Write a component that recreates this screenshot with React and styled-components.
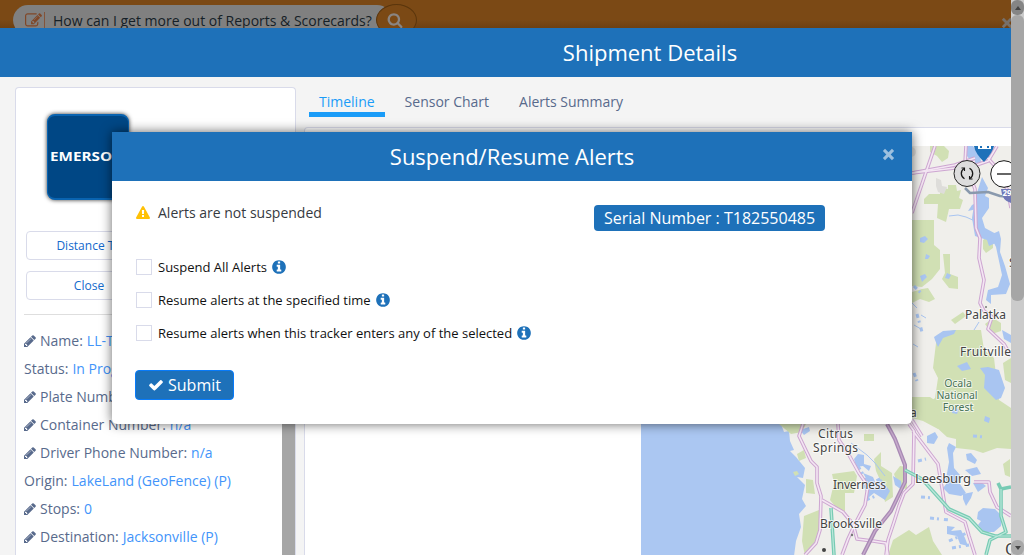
import React from "react";
import styled, { createGlobalStyle } from "styled-components";

const GlobalStyle = createGlobalStyle`
  * { box-sizing: border-box; }
  html, body { margin: 0; height: 100%; overflow: hidden; }
  body { font-family: "Open Sans", "Noto Sans", sans-serif; font-size: 14px; color: #212529; background: #7b4915; }
  button { font-family: inherit; }
`;

const blue = "#1e71b9";

const ICONS = {
  check: "M1671 566q0 40-28 68l-724 724-136 136q-28 28-68 28t-68-28l-136-136-362-362q-28-28-28-68t28-68l136-136q28-28 68-28t68 28l294 295 656-657q28-28 68-28t68 28l136 136q28 28 28 68z",
  pencil: "M491 1536l91-91-235-235-91 91v107h128v128h107zm523-928q0-22-22-22-10 0-17 7l-542 542q-7 7-7 17 0 22 22 22 10 0 17-7l542-542q7-7 7-17zm-54-192l416 416-832 832h-416v-416zm683 96q0 53-37 90l-166 166-416-416 166-165q36-38 90-38 53 0 91 38l235 234q37 39 37 91z",
  info: "M1152 1376v-160q0-14-9-23t-23-9h-96v-512q0-14-9-23t-23-9h-320q-14 0-23 9t-9 23v160q0 14 9 23t23 9h96v320h-96q-14 0-23 9t-9 23v160q0 14 9 23t23 9h448q14 0 23-9t9-23zm-128-896v-160q0-14-9-23t-23-9h-192q-14 0-23 9t-9 23v160q0 14 9 23t23 9h192q14 0 23-9t9-23zm640 416q0 209-103 385.5t-279.5 279.5-385.5 103-385.5-103-279.5-279.5-103-385.5 103-385.5 279.5-279.5 385.5-103 385.5 103 279.5 279.5 103 385.5z",
  warning: "M1024 1375v-190q0-14-9.5-23.5t-22.5-9.5h-192q-13 0-22.5 9.5t-9.5 23.5v190q0 14 9.5 23.5t22.5 9.5h192q13 0 22.5-9.5t9.5-23.5zm-2-374l18-459q0-12-10-19-13-11-24-11h-220q-11 0-24 11-10 7-10 21l17 457q0 10 10 16.5t24 6.5h185q14 0 23.5-6.5t10.5-16.5zm-14-934l768 1408q35 63-2 126-17 29-46.5 46t-63.5 17h-1536q-34 0-63.5-17t-46.5-46q-37-63-2-126l768-1408q17-31 47-49t65-18 65 18 47 49z",
  search: "M1216 832q0-185-131.5-316.5t-316.5-131.5-316.5 131.5-131.5 316.5 131.5 316.5 316.5 131.5 316.5-131.5 131.5-316.5zm512 832q0 52-38 90t-90 38q-54 0-90-38l-343-342q-179 124-399 124-143 0-273.5-55.5t-225-150-150-225-55.5-273.5 55.5-273.5 150-225 225-150 273.5-55.5 273.5 55.5 225 150 150 225 55.5 273.5q0 220-124 399l343 343q37 37 37 90z",
  edit: "M888 1184l116-116-152-152-116 116v56h96v96h56zm440-720q-16-16-33 1l-350 350q-17 17-1 33t33-1l350-350q17-17 1-33zm80 594v190q0 119-84.5 203.5t-203.5 84.5h-832q-119 0-203.5-84.5t-84.5-203.5v-832q0-119 84.5-203.5t203.5-84.5h832q63 0 117 25 15 7 18 23 3 17-9 29l-49 49q-14 14-32 8-23-6-45-6h-832q-66 0-113 47t-47 113v832q0 66 47 113t113 47h832q66 0 113-47t47-113v-126q0-13 9-22l64-64q15-15 35-7t20 29zm-96-738l288 288-672 672h-288v-288zm444 132l-92 92-288-288 92-92q28-28 68-28t68 28l152 152q28 28 28 68t-28 68z",
};

const IconSvg = styled.svg`
  width: ${(p) => p.$size}px;
  height: ${(p) => p.$size}px;
  fill: ${(p) => p.$color || "currentColor"};
  flex: none;
  display: block;
`;
const Icon = ({ name, size = 14, color, box = "0 0 1792 1792" }) => (
  <IconSvg viewBox={box} $size={size} $color={color} aria-hidden="true">
    <path fillRule="evenodd" d={ICONS[name]} />
  </IconSvg>
);

const Viewport = styled.div`
  display: flex;
  height: 555px;
  width: 1024px;
  overflow: hidden;
  position: relative;
`;
const Page = styled.div`
  flex: 1;
  min-width: 0;
  overflow: hidden;
  display: flex;
  flex-direction: column;
`;

/* Dimmed bar behind the details window */
const TopBar = styled.header`
  height: 28px;
  flex: none;
  width: 100%;
  padding: 5px 0 0 13px;
  display: flex;
  align-items: flex-start;
  overflow: hidden;
  background: linear-gradient(#7b4915 20px, #6d4012 28px);
`;
const SearchPill = styled.div`
  height: 30px;
  width: 379px;
  flex: none;
  border-radius: 15px;
  background: #808080;
  display: flex;
  align-items: center;
  padding-left: 12px;
  color: #152027;
  font-size: 14px;
  white-space: nowrap;
`;
const PillDivider = styled.span`
  width: 1px;
  height: 16px;
  margin: 0 8px 0 2px;
  background: #84543a;
`;
const SearchButton = styled.div`
  width: 41px;
  height: 32px;
  margin: -1px 0 0 -16px;
  border: 1px solid #5a350c;
  border-radius: 50%;
  background: #7b4915;
  display: flex;
  justify-content: center;
  padding: 7px 3px 0 0;
`;
const DimmedClose = styled.span`
  margin: 12px -2px 0 auto;
`;

const TitleBar = styled.div`
  height: 49px;
  flex: none;
  width: ${(p) => p.$width}px;
  background: ${blue};
  color: #fff;
  font-size: 22px;
  line-height: 48px;
  text-align: center;
  display: flex;
  justify-content: center;
`;
const Details = styled.main`
  flex: 1;
  min-height: 0;
  width: 1300px;
  background: #f4f4f4;
  display: flex;
  gap: 8px;
  padding: 10px 15px 0;
`;

const Sidebar = styled.aside`
  width: 281px;
  flex: none;
  border: 1px solid #d9dbea;
  border-bottom: 0;
  border-radius: 4px 4px 0 0;
  background: #fff;
  display: flex;
  overflow: hidden;
`;
const SidebarBody = styled.div`
  flex: 1;
  padding: 26px 8px 0;
`;
const SidebarThumb = styled.div`
  width: 13px;
  margin-top: 180px;
  background: #a6a6a6;
`;
const Logo = styled.div`
  width: 82px;
  height: 86px;
  margin-left: 23px;
  border: 1px solid #0963b0;
  border-width: 2px 1px;
  border-radius: 8px;
  background: #004785;
  box-shadow: 0 0 4px 0 #333;
  color: #fff;
  font-size: 12px;
  font-weight: 700;
  line-height: 82px;
  padding-left: 2px;
  white-space: nowrap;
  overflow: hidden;
`;
const LogoName = styled.span`
  display: inline-block;
  transform: scaleX(1.27);
  transform-origin: left;
`;
const SideActions = styled.div`
  display: grid;
  grid-template-columns: 126px;
  gap: 11px;
  margin: 31px 2px 14px;
`;
const SideButton = styled.button`
  height: 29px;
  padding: 0;
  border: 1px solid #d9dbea;
  border-radius: 4px;
  background: #fff;
  color: #1269cc;
  font-size: 12px;
`;
const FieldList = styled.div`
  border-top: 1px solid #dedede;
  padding-top: 11px;
`;
const Field = styled.div`
  display: flex;
  align-items: center;
  height: 28px;
  gap: 4px;
  font-size: 14px;
  color: #586a8c;
  white-space: nowrap;
  svg { margin: 1px -1px 0 0; width: 13px; height: 14px; }
`;
const Value = styled.span`
  color: #4294fa;
`;

const Content = styled.section`
  flex: 1;
  display: flex;
  flex-direction: column;
`;
const Tabs = styled.nav`
  display: flex;
  gap: 10px;
  padding-left: 5px;
  height: 40px;
`;
const Tab = styled.span`
  height: 30px;
  padding: 0 10px;
  line-height: 30px;
  color: ${(p) => (p.$active ? "#1a9cf8" : "#586a8c")};
  border-bottom: ${(p) => (p.$active ? "5px solid #1a9cf8" : "0")};
`;
const Panel = styled.div`
  flex: 1;
  min-height: 0;
  border: 1px solid #d9dbea;
  border-bottom: 0;
  border-radius: 4px 4px 0 0;
  background: #fff;
  padding: 18px 0 0 336px;
`;
const MapSvg = styled.svg`
  display: block;
  width: 370px;
  height: 409px;
  font-family: "Noto Sans", "Open Sans", sans-serif;
`;

/* Window scrollbar */
const Scrollbar = styled.div`
  width: 13px;
  flex: none;
  background: #cbcbcb;
  display: flex;
  flex-direction: column;
`;
const ScrollArrow = styled.div`
  height: 15px;
  flex: none;
  border-radius: 6px;
  background: ${(p) => (p.$up ? "#858585" : "#a8a8a8")};
  display: flex;
  align-items: center;
  justify-content: center;
  &::before {
    content: "";
    border: 3.5px solid transparent;
    border-top-width: ${(p) => (p.$up ? 0 : 4)}px;
    border-bottom-width: ${(p) => (p.$up ? 4 : 0)}px;
    border-top-color: #444;
    border-bottom-color: #444;
  }
`;
const ScrollThumb = styled.div`
  height: 286px;
  border-radius: 6px;
  background: #a6a6a6;
  margin-bottom: auto;
`;

/* Dialog */
const Dialog = styled.div`
  position: absolute;
  left: 112px;
  top: 132px;
  width: 800px;
  height: 292px;
  background: #fff;
  border-radius: 0 0 5px 5px;
  box-shadow: 0 0 12px rgba(0, 0, 0, 0.6);
`;
const DialogHeader = styled(TitleBar)`
  position: relative;
`;
const CloseButton = styled.button`
  position: absolute;
  right: 16px;
  top: 16px;
  width: 14px;
  height: 14px;
  padding: 0;
  border: 0;
  background: none;
  display: flex;
`;
const DialogBody = styled.div`
  padding: 21px 24px 0;
`;
const StatusRow = styled.div`
  display: flex;
  align-items: flex-start;
  height: 48px;
`;
const Status = styled.div`
  display: flex;
  align-items: center;
  gap: 8px;
  width: 458px;
  height: 21px;
  font-size: 14px;
  color: #363a3f;
`;
const Serial = styled.span`
  margin-top: 3px;
  height: 26px;
  padding: 0 10px;
  width: 231px;
  white-space: nowrap;
  border-radius: 4px;
  background: ${blue};
  color: #fff;
  font-size: 16px;
  line-height: 26px;
`;
const Option = styled.label`
  display: flex;
  align-items: center;
  height: 33px;
  font-size: 13px;
  color: #111;
  white-space: nowrap;
  svg { margin-left: 4px; }
`;
const Box = styled.span`
  width: 16px;
  height: 16px;
  margin-right: 6px;
  border: 1px solid #d9dbea;
  background: #fff;
`;
const Submit = styled.button`
  display: flex;
  align-items: center;
  gap: 4px;
  margin: 21px 0 0 -1px;
  width: 99px;
  height: 30px;
  padding: 0 0 0 12px;
  border: 1px solid #087bfa;
  border-radius: 4px;
  background: ${blue};
  color: #fff;
  font-size: 16px;
`;

const Cross = ({ size, color }) => (
  <IconSvg viewBox="0 0 12 12" $size={size} $color={color}>
    <path d="M.8 2.8 2.8.8 6 4 9.200.8l2 2L8 6l3.200 3.200-2 2L6 8l-3.200 3.200-2-2L4 6z" />
  </IconSvg>
);

const PARKS = [
  "M912 220h22v25l6 5v19l-8 10-10 8-10-1z",
  "M924 199l5-5h11v-7l8 2v-4h8l1 6 4-1-2 8 4 2-3 9h-11l-3 13-9-4 1-14h-14z",
  "M930 146h14l5 5-1 7-6 4-5-6-7-4z",
  "M943 254h7v20l8 3v12l-9-1-7-9 3-6z",
  "M912 292l10-3 6-1 7 11-6 3-9-3-8 4z",
  "M983 240l5-4 5 4v8l-7 5-3-4z",
  "M951 320l12-8 3 4-11 8z",
  "M937 335l17-5h27l3 20 10 8 5 42 12 8v41l-14-1-14 5-9-3-18-2v-9l-9-2-13-12-7-4-4-9 5-8 7-6 3-20-5-10z",
  "M912 397h18l9 6-5 7 9 12-5 7-15-8-11-3z",
  "M985 324l8-6 8 5v8l-9 3z",
  "M1003 363l8-5v25l-6-3z",
  "M779 424h27l-4 8-11 2z",
  "M797 454l7-4 2 8-7 3z",
  "M806 479l7 1 2 14-9-1z",
  "M832 474l22-3 3 5-3 17h-9v18h-6l-9-11 4-17z",
  "M804 516l15-6v29l-6 5-8 12-3-15z",
  "M864 434h10v7h-10z",
  "M874 459l7-7v14l11 7 1 24-8 5-4-20-5-11z",
  "M894 474l6-8 7 1v22l-8-1z",
  "M893 540l16-10 7 5 13-8 4 14 9 14h-54z",
  "M1003 464l7-5v18l-5-2z",
];
const LAKES = [
  "M965 146h8l6 8 3 10h-9l-6-8z",
  "M982 177l6 11-3 8 4 2v10l-7 10 3 10 13 7v7l-9 4-2-6-12-4-3-18 3-19z",
  "M990 235l9-4 2 8-1 13 5 14 5 18-4 10-15 1v9l-5-4 2-10 10-3 4-12-6-28z",
  "M980 201l-3 8-9 2 4-6z",
  "M934 337l9-6 13-1-2 4-11 4-5 9-3-7z",
  "M957 366l10-4 4 7-9 2z",
  "M988 367l11 3 6 18-4 10-5 2-12-12 1-13-5-7z",
  "M1002 330l9 5v8l-7-4z",
  "M927 436l8-4 3 5-4 7-7-1z",
  "M949 443l7 4-3 6 1 15 6 7-2 11-11 5-1-12 3-17-2-14z",
  "M966 454l5-1 6 7-2 4-8-4z",
  "M965 470l12-3 4 7-9 2z",
  "M947 483l13 1 6 9-5 3-12-2-6-6z",
  "M963 494l10-2-2 6-5 8-3-7z",
  "M978 512l5-4 12 1 7 7-1 10-7 6h-10l-6-7 3-4-4-2z",
  "M973 483l8-1 5 4-8 6z",
  "M947 526l8 1-4 4 10-1 4 8 3 8-8-2-3-8-10-2z",
  "M858 454l6 1v9l7 2-2 5-6-5-7 1-2-8z",
  "M863 473l10 4 3 7 5-5 9 12-5 9-11-7-6 5-4-12 4-4z",
  "M893 476l8 5 1 9-7-5z",
  "M800 430l9-3 1 4-6 4z",
  "M920 276l5-2 2 3-5 5z",
  "M947 273l4 2-2 4-4-1z",
  "M920 238l5-2 3 3-4 4-4-1z",
  "M926 254l4 2-2 3h-3z",
  "M952 408l7 1-2 5-5-1z",
  "M985 416l5 2-1 5-5-2z",
];
const PINK_ROADS = [
  "M803 424l-4 12 12 25 6 6v16l4 13-1 34-4 13-11 12",
  "M838 424l1 16 10 15 10 18 9 13-3 19-11 21-6 13-6 16",
  "M909 424l5 7-1 53-9 9-5 13-5 16-6 18-2 15",
  "M913 431l25 33 8 48 19 10 4 14 6 19",
  "M974 482h15l1 10 7 15 14 9",
  "M822 500l21 12 10 12 4 15 16 2 13 2 2 12",
  "M935 146l-23 67",
  "M912 173l43-8 20-7",
  "M966 146l-1 18 10 25 1 39 4 10-1 20 5 22-4 23 4 8 8 6-4 12 16 15 7 12",
  "M912 420l10 16",
  "M977 146l17 19 14 26 3 17",
  "M997 146l-9 15-23 8",
  "M912 173l43-5 20-7",
];

const RoadMap = () => (
  <MapSvg viewBox="641 146 370 409">
    <rect x="641" y="146" width="370" height="409" fill="#f0efeb" />
    <path fill="#abc7f2" d="M641 146h140v278l3 8 5-1 1 10 4 9-4 1 6 6 9 11-2 10-6-1 8 8-3 14 4 7-7 8 2 13-5 14-2 15H641z" />
    <g fill="#d1e0b4">
      {PARKS.map((d) => <path key={d} d={d} />)}
      <path d="M793 472l4-1 2 3-4 2z" />
    </g>
    <g fill="#a9c5f1">{LAKES.map((d) => <path key={d} d={d} />)}</g>
    <g fill="none" stroke="#a9c5f1">
      <path d="M949 216l9-1 8 2 9 4M912 303l5 5M921 315l5 3M914 325l7 4M913 344l5 3M974 330l5-8M851 443l16 12 8 8 10 13" />
      <path strokeDasharray="4 3 2 5" strokeWidth="3" d="M858 466l15 25M864 487l18-9M914 286l8 8M917 314l5 18M914 373l3 8M930 518l20 2M949 541l20-9M952 548l17-3M918 461l8-2M921 497l12 1M973 436l11 1M866 500l12-5" />
    </g>
    <g fill="none" strokeLinejoin="round">
      <g stroke="#cda6d1" strokeWidth="3.6">{PINK_ROADS.map((d) => <path key={d} d={d} />)}</g>
      <g stroke="#f4e6f3" strokeWidth="1.6">{PINK_ROADS.map((d) => <path key={d} d={d} />)}</g>
      <path stroke="#a98bb5" strokeWidth="4" d="M887 424l8 15 10 26v17l-14 29-16 20-6 12-6 12" />
      <path stroke="#c8abcd" strokeWidth="1.3" d="M887 424l8 15 10 26v17l-14 29-16 20-6 12-6 12" />
      <g stroke="#78cbb4" strokeWidth="3.6">
        <path d="M905 470l17 9 27 30 20 9 13 14 13 4h16M831 508l3 47M998 483l3 6 10-2M1001 489v27l5 16-16 8-4 15" />
      </g>
      <path stroke="#bce8da" strokeWidth="1.2" d="M905 470l17 9 27 30 20 9 13 14 13 4h16M831 508l3 47M1001 489v27l5 16-16 8-4 15" />
      <path stroke="#8999ad" strokeWidth="2.5" d="M965 188l5 5 18-1 12 4 11 1" />
    </g>
    <g fill="#deddda">
      <circle cx="911" cy="152" r="5" />
      <path d="M936 178l5 2 1 6 5 1-3 7-6-2-2-6z" />
    </g>
    <g fill="#444" fontSize="12" stroke="#fff" strokeWidth="2" strokeOpacity=".7" paintOrder="stroke">
      <text x="965" y="319" textLength="41">Palatka</text>
      <text x="960" y="356" textLength="51">Fruitville</text>
      <text x="910" y="417">a</text>
      <text x="1009" y="267" fontSize="13">S</text>
      <text x="818" y="438" textLength="35">Citrus</text>
      <text x="813" y="452" textLength="45">Springs</text>
      <text x="833" y="489" textLength="53">Inverness</text>
      <text x="820" y="528" textLength="62">Brooksville</text>
      <text x="915" y="483" fontSize="13" textLength="56">Leesburg</text>
      <text x="1005" y="555" fontSize="16">O</text>
      <g fill="#487257" fontSize="10.5" textAnchor="middle">
        <text x="958" y="387">Ocala</text>
        <text x="957" y="399" textLength="41">National</text>
        <text x="958" y="411">Forest</text>
      </g>
    </g>
    <circle cx="824" cy="550" r="2" fill="#444" />
    <circle cx="852" cy="535" r="1.2" fill="#777" />
    <circle cx="986" cy="307" r="1" fill="#777" />
    <path fill={blue} d="M974 146h20q-1 6-10 16-9-9-10-16z" />
    <path fill="#fff" d="M978 146h2v2h2v-2h5v2h2v-2h2v3h-13z" />
    <path fill="#7178b7" d="M1001 189h10v14q-9-2-10-14z" />
    <text x="1002.500" y="196" fontSize="8" fontWeight="700" fill="#fff">29</text>
    <circle cx="967" cy="173.500" r="13" fill="#ddd" stroke="#282828" />
    <g fill="none" stroke="#171717" strokeWidth="1.3">
      <path d="M964.5 178.800a6 6 0 0 1-.5-10.300M969.500 168.200a6 6 0 0 1 .5 10.300" />
      <path d="M961.500 168h3v3M972.500 179h-3v-3" strokeWidth="1.1" />
    </g>
    <circle cx="1004" cy="174" r="13.300" fill="#fff" stroke="#171717" />
    <path d="M997 174h14" stroke="#333" strokeWidth="1.5" />
  </MapSvg>
);

const FIELDS = [
  { label: "Name:", value: "LL-T182550485", editable: true },
  { label: "Status:", value: "In Progress" },
  { label: "Plate Number:", value: "n/a", editable: true },
  { label: "Container Number:", value: "n/a", editable: true },
  { label: "Driver Phone Number:", value: "n/a", editable: true },
  { label: "Origin:", value: "LakeLand (GeoFence) (P)" },
  { label: "Stops:", value: "0", editable: true },
  { label: "Destination:", value: "Jacksonville (P)", editable: true },
];
const OPTIONS = [
  "Suspend All Alerts",
  "Resume alerts at the specified time",
  "Resume alerts when this tracker enters any of the selected",
];

export default function App() {
  return (
    <Viewport>
      <GlobalStyle />
      <Page>
        <TopBar>
          <SearchPill>
            <Icon name="edit" size={17} color="#804727" />
            <PillDivider />
            How can I get more out of Reports &amp; Scorecards?
          </SearchPill>
          <SearchButton>
            <Icon name="search" size={16} color="#8a8582" />
          </SearchButton>
          <DimmedClose>
            <Cross size={12} color="#77706a" />
          </DimmedClose>
        </TopBar>
        <TitleBar $width={1300}>Shipment Details</TitleBar>
        <Details>
          <Sidebar>
            <SidebarBody>
              <Logo>
                <LogoName>EMERSON</LogoName>
              </Logo>
              <SideActions>
                <SideButton>Distance To</SideButton>
                <SideButton>Close</SideButton>
              </SideActions>
              <FieldList>
                {FIELDS.map((f) => (
                  <Field key={f.label}>
                    {f.editable && <Icon name="pencil" box="128 0 1664 1792" />}
                    <span>{f.label}</span>
                    <Value>{f.value}</Value>
                  </Field>
                ))}
              </FieldList>
            </SidebarBody>
            <SidebarThumb />
          </Sidebar>
          <Content>
            <Tabs>
              <Tab $active>Timeline</Tab>
              <Tab>Sensor Chart</Tab>
              <Tab>Alerts Summary</Tab>
            </Tabs>
            <Panel>
              <RoadMap />
            </Panel>
          </Content>
        </Details>
      </Page>
      <Scrollbar>
        <ScrollArrow $up />
        <ScrollThumb />
        <ScrollArrow />
      </Scrollbar>
      <Dialog role="dialog">
        <DialogHeader $width={800}>
          Suspend/Resume Alerts
          <CloseButton aria-label="Close">
            <Cross size={13} color="#9dc0df" />
          </CloseButton>
        </DialogHeader>
        <DialogBody>
          <StatusRow>
            <Status>
              <Icon name="warning" size={14} color="#ffc107" />
              Alerts are not suspended
            </Status>
            <Serial>Serial Number : T182550485</Serial>
          </StatusRow>
          <div>
            {OPTIONS.map((text) => (
              <Option key={text}>
                <Box />
                {text}
                <Icon name="info" size={16} color={blue} />
              </Option>
            ))}
          </div>
          <Submit>
            <Icon name="check" size={16} />
            Submit
          </Submit>
        </DialogBody>
      </Dialog>
    </Viewport>
  );
}
